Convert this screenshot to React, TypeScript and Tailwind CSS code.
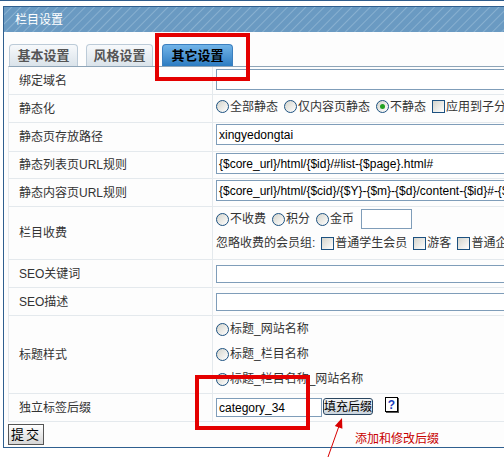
import type { ReactNode } from "react";

const font = "font-['Liberation_Sans','Noto_Sans_CJK_SC',sans-serif]";

function Radio({ checked = false }: { checked?: boolean }) {
  return (
    <span className="flex h-[13px] w-[13px] shrink-0 items-center justify-center rounded-full border border-[#1c5180] bg-gradient-to-br from-[#d4d4cc] to-white">
      {checked && <span className="h-[5px] w-[5px] rounded-full bg-[#21a121]" />}
    </span>
  );
}

function Check() {
  return (
    <span className="h-[13px] w-[13px] shrink-0 border border-[#1c5180] bg-gradient-to-br from-[#d4d4cc] to-white" />
  );
}

function Opt({ label, checked, box }: { label: string; checked?: boolean; box?: boolean }) {
  return (
    <span className="mr-[6px] flex items-center">
      {box ? <Check /> : <Radio checked={checked} />}
      <span className="ml-[1px] whitespace-nowrap">{label}</span>
    </span>
  );
}

function TextInput({ value = "", className = "" }: { value?: string; className?: string }) {
  return (
    <div
      className={`flex items-center border border-[#7f9db9] bg-white pl-[2px] text-[12px] text-black ${className}`}
    >
      {value}
    </div>
  );
}

function Row({
  label,
  h,
  align = "items-start",
  children,
}: {
  label: string;
  h: string;
  align?: string;
  children: ReactNode;
}) {
  return (
    <div className={`flex border-b border-[#e4e9ed] ${h}`}>
      <div className="flex w-[204px] shrink-0 items-center border-r border-[#e4e9ed] pl-[10px] text-[12px] text-[#333]">
        {label}
      </div>
      <div className={`flex min-w-0 flex-1 pl-[3px] ${align}`}>{children}</div>
    </div>
  );
}

function Tab({ label, active, w }: { label: string; active?: boolean; w: string }) {
  return (
    <div
      className={`flex h-[22px] items-center justify-center rounded-t-[4px] border border-b-0 text-[13px] font-bold ${w} ${
        active
          ? "border-[#3b7fbf] bg-gradient-to-b from-[#71b4e8] to-[#2c7cc2] text-black"
          : "border-[#bccbd8] bg-gradient-to-b from-[#f7f9fb] to-[#dae3ea] text-[#555]"
      }`}
    >
      {label}
    </div>
  );
}

export default function App() {
  return (
    <div className={`relative h-[469px] w-[504px] overflow-hidden bg-white ${font}`}>
      <div className="h-px bg-[#2d5b8b]" />

      <div className="ml-[3px] mt-[5px] w-[620px] border border-[#2f5f8f] bg-[#fdfdfd]">
        <div className="flex h-[25px] items-center bg-[repeating-linear-gradient(135deg,#6a9ac2_0px,#6a9ac2_4.5px,#88b0d0_5.5px,#6a9ac2_6.5px)] pl-[11px] text-[12px] text-white">
          栏目设置
        </div>

        <div className="flex h-[34px] items-end pl-[5px]">
          <Tab label="基本设置" w="w-[69px]" />
          <div className="w-[8px]" />
          <Tab label="风格设置" w="w-[67px]" />
          <div className="w-[9px]" />
          <Tab label="其它设置" w="w-[71px]" active />
        </div>

        <div className="ml-[4px] border-l border-t border-l-[#e4e9ed] border-t-[#8fa5b8]">
          <Row label="绑定域名" h="h-[28px]">
            <TextInput className="mt-[2px] h-[21px] w-[400px]" />
          </Row>

          <Row label="静态化" h="h-[28px]" align="items-center pb-[4px] text-[12px] text-[#333]">
            <Opt label="全部静态" />
            <Opt label="仅内容页静态" />
            <Opt label="不静态" checked />
            <Opt label="应用到子分类" box />
          </Row>

          <Row label="静态页存放路径" h="h-[29px]">
            <TextInput value="xingyedongtai" className="mt-px h-[21px] w-[400px]" />
          </Row>

          <Row label="静态列表页URL规则" h="h-[27px]">
            <TextInput
              value="{$core_url}/html/{$id}/#list-{$page}.html#"
              className="mt-px h-[21px] w-[400px]"
            />
          </Row>

          <Row label="静态内容页URL规则" h="h-[28px]">
            <TextInput
              value="{$core_url}/html/{$cid}/{$Y}-{$m}-{$d}/content-{$id}#-{$page}.html#"
              className="mt-px h-[21px] w-[400px] whitespace-nowrap"
            />
          </Row>

          <Row label="栏目收费" h="h-[53px]" align="flex-col text-[12px] text-[#333]">
            <div className="flex h-[23px] items-center pt-[1px]">
              <Opt label="不收费" />
              <Opt label="积分" />
              <Opt label="金币" />
              <TextInput className="ml-[1px] h-[20px] w-[51px]" />
            </div>
            <div className="flex h-[26px] items-center">
              <span className="whitespace-nowrap">忽略收费的会员组: </span>
              <span className="w-[6px]" />
              <Opt label="普通学生会员" box />
              <Opt label="游客" box />
              <Opt label="普通企业会员" box />
            </div>
          </Row>

          <Row label="SEO关键词" h="h-[28px]">
            <TextInput className="mt-[5px] h-[18px] w-[400px]" />
          </Row>

          <Row label="SEO描述" h="h-[28px]">
            <TextInput className="mt-[5px] h-[18px] w-[400px]" />
          </Row>

          <Row label="标题样式" h="h-[78px]" align="flex-col pt-[1px] text-[12px] text-[#333]">
            <div className="flex h-[24px] items-center">
              <Opt label="标题_网站名称" />
            </div>
            <div className="flex h-[26px] items-center">
              <Opt label="标题_栏目名称" />
            </div>
            <div className="flex h-[24px] items-center">
              <Opt label="标题_栏目名称_网站名称" />
            </div>
          </Row>

          <Row label="独立标签后缀" h="h-[28px]">
            <TextInput value="category_34" className="mt-[4px] h-[19px] w-[106px]" />
            <button className="ml-px mt-[4px] h-[17px] w-[50px] rounded-[3px] border border-[#2a4660] bg-gradient-to-b from-[#f4f6f8] to-[#c9d3dc] text-[12px] leading-none text-black">
              填充后缀
            </button>
            <span className="ml-[12px] mt-[3px] flex h-[15px] w-[13px] items-center justify-center border border-black bg-white text-[12px] font-bold leading-none text-[#1a3fbf] shadow-[1px_1px_0_#555]">
              ?
            </span>
          </Row>
        </div>

        <div className="px-[4px] pb-[2px] pt-[2px]">
          <button className="flex h-[21px] w-[36px] items-center justify-center border border-[#555] bg-gradient-to-b from-white to-[#d6d6d6] text-[13px] tracking-[2px] text-black">
            提交
          </button>
        </div>
      </div>

      {/* annotation marks */}
      <div className="absolute left-[155px] top-[33px] h-[48px] w-[95px] border-4 border-[#e40000]" />
      <div className="absolute left-[195px] top-[375px] h-[55px] w-[115px] border-4 border-[#e40000]" />
      <svg className="absolute left-[320px] top-[410px]" width="40" height="52" viewBox="0 0 40 52">
        <line x1="8" y1="47" x2="19" y2="16" stroke="#d80000" strokeWidth="1" />
        <polygon points="22,8 22.4,18.8 14.8,16" fill="#d80000" />
      </svg>
      <div className="absolute left-[355px] top-[430px] text-[12px] text-[#c80000]">添加和修改后缀</div>
    </div>
  );
}
